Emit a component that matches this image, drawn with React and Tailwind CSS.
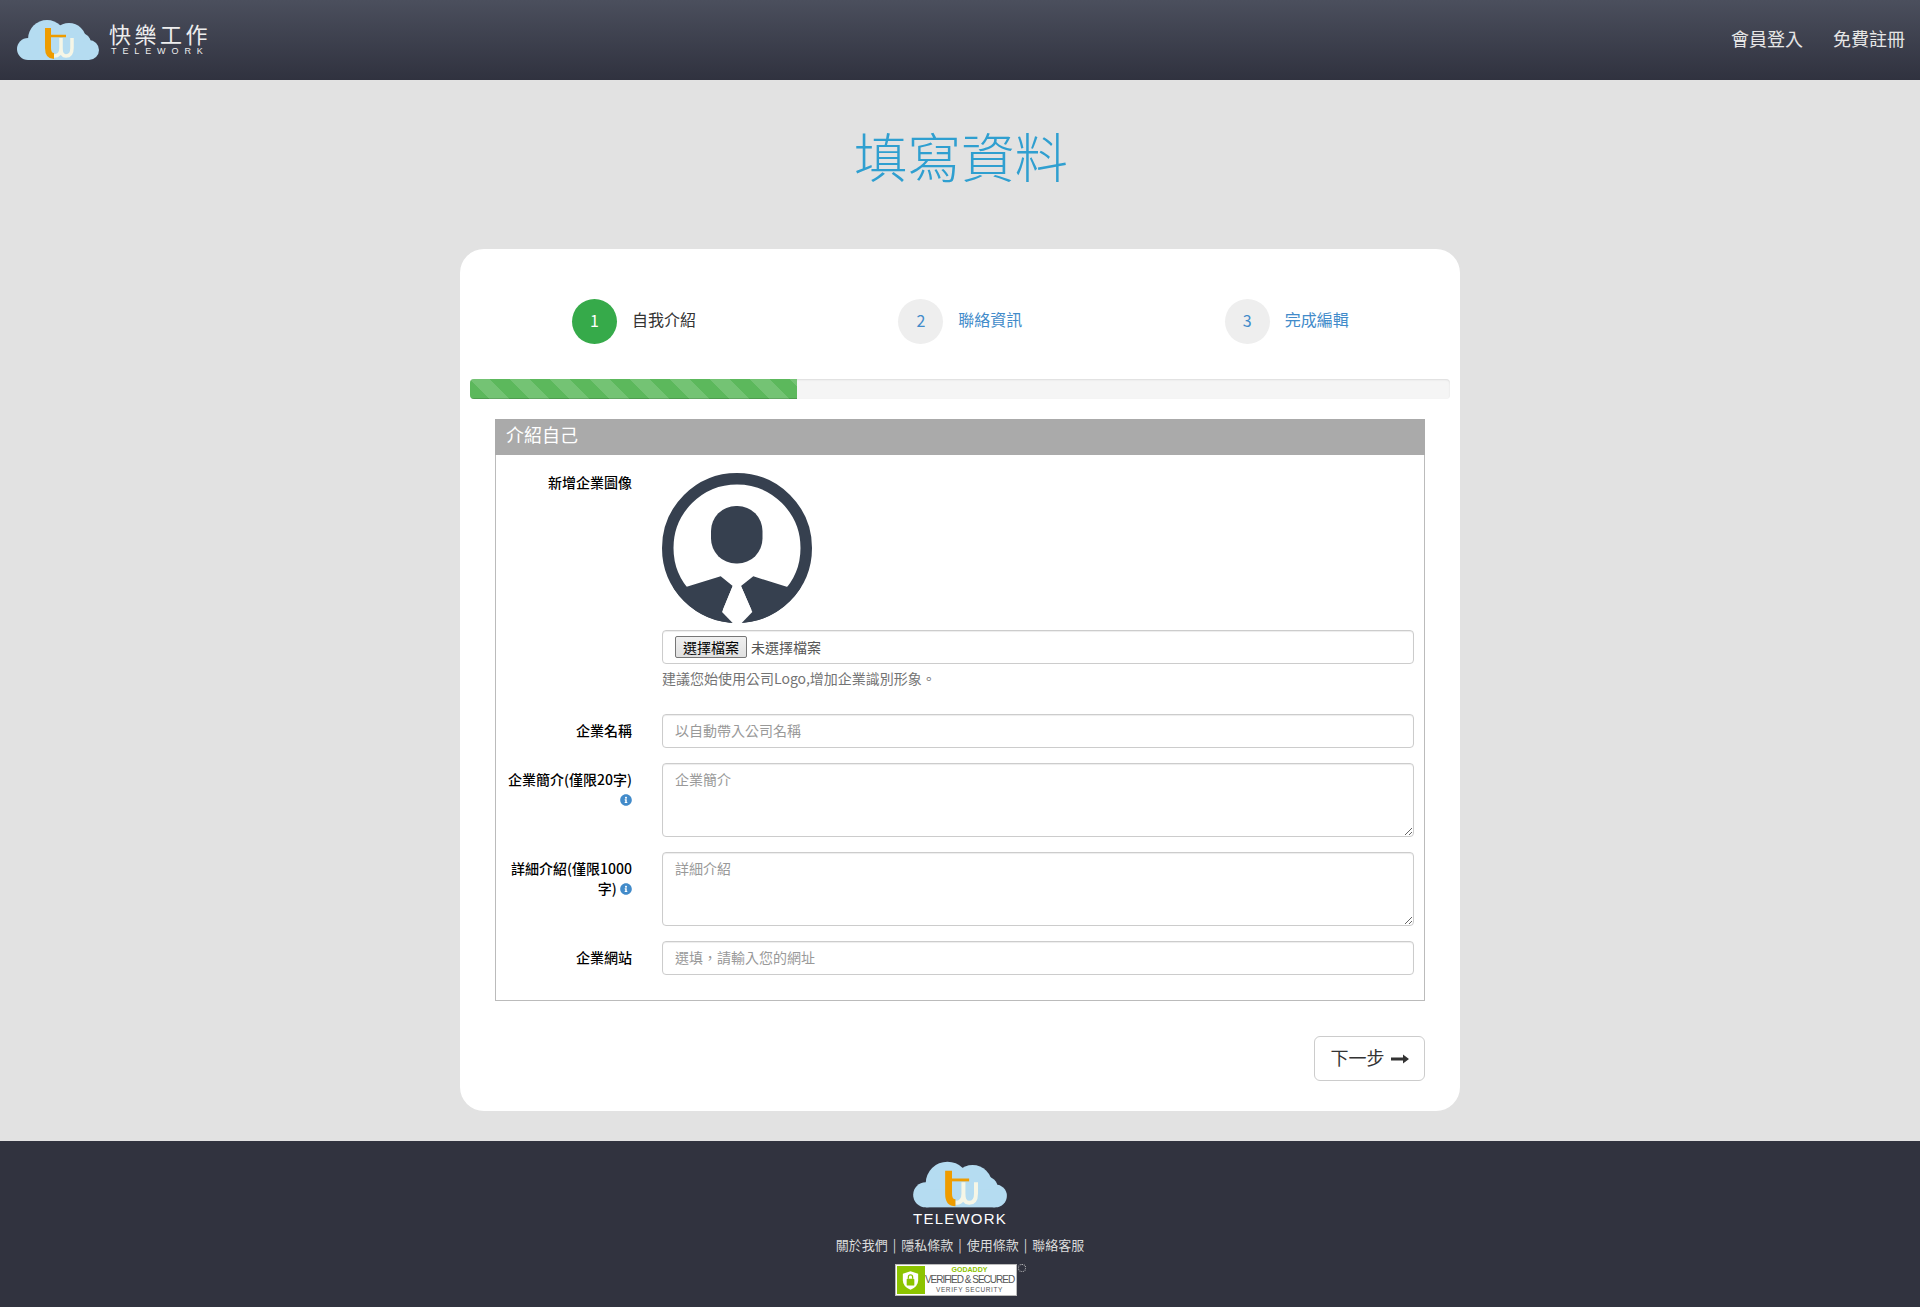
import { FaInfoCircle } from 'react-icons/fa';

const steps = [
  { n: 1, label: '自我介紹', active: true },
  { n: 2, label: '聯絡資訊' },
  { n: 3, label: '完成編輯' },
];

const inputClass = 'w-full h-[34px] px-3 pb-0.5 text-sm bg-white border border-[#ccc] rounded shadow-[inset_0_1px_1px_rgba(0,0,0,0.075)] placeholder:text-[#999] outline-none';
const textareaClass = 'block w-full h-[74px] px-3 pt-[5px] pb-1.5 text-sm leading-5 bg-white border border-[#ccc] rounded shadow-[inset_0_1px_1px_rgba(0,0,0,0.075)] placeholder:text-[#999] outline-none';

function CloudLogo({ className }) {
  return (
    <svg viewBox="0 0 84 40" className={className}>
      <g fill="#b5dcf1">
        <circle cx="12" cy="29" r="11" />
        <circle cx="31" cy="19" r="19" />
        <circle cx="53" cy="20" r="17" />
        <circle cx="65" cy="23" r="10" />
        <circle cx="73" cy="30" r="10" />
        <rect x="12" y="24" width="61" height="16" />
      </g>
      <path d="M38 36 Q45 36 45 28 V18 M45 28 Q45 36 50 36 Q56 36 56 28 V18" fill="none" stroke="#f6f6e6" strokeWidth="3.5" />
      <path d="M32 8 V28 Q32 36 38 36" fill="none" stroke="#ee9c00" strokeWidth="6" />
      <path d="M32 16 H50" fill="none" stroke="#ee9c00" strokeWidth="2.5" />
    </svg>
  );
}

function Avatar() {
  return (
    <svg viewBox="0 0 150 150" className="block w-[150px] h-[150px]">
      <defs>
        <clipPath id="avatar-clip"><circle cx="75" cy="75" r="75" /></clipPath>
      </defs>
      <circle cx="75" cy="75" r="69.25" fill="none" stroke="#36404f" strokeWidth="11.5" />
      <rect x="49" y="33" width="51.5" height="57.5" rx="25" fill="#36404f" />
      <g clipPath="url(#avatar-clip)" fill="#36404f">
        <polygon points="24.7,113.7 58.7,103.3 70.7,113 60,139 70.7,150 0,150 0,113.7" />
        <polygon points="124.7,113.7 91.3,103.3 79,113 90.3,139 79.7,150 150,150 150,113.7" />
      </g>
      {/* the tie cuts through the ring at the bottom */}
      <polygon points="70.7,113 60,139 70.7,150 79.7,150 90.3,139 79,113" fill="#fff" />
    </svg>
  );
}

function Row({ label, className = '', children }) {
  return (
    <div className={`flex gap-[30px] ${className}`}>
      <label className="w-[136px] shrink-0 text-right text-sm leading-5 font-medium text-black pt-[6px]">{label}</label>
      <div className="flex-1 min-w-0">{children}</div>
    </div>
  );
}

function SecurityBadge() {
  return (
    <div className="flex items-start">
      <div className="w-[122px] h-[32px] bg-white border border-[#bbb] flex items-stretch p-px">
        <div className="w-[28px] shrink-0 bg-[#8cc400] flex items-center justify-center">
          <svg viewBox="0 0 20 24" className="w-[17px] h-[21px]">
            <path d="M10 1 L19 4 V12 Q19 19 10 23 Q1 19 1 12 V4 Z" fill="#fff" />
            <rect x="5.5" y="10" width="9" height="8" rx="1" fill="#8cc400" />
            <path d="M7.5 10 V8 Q7.5 5.5 10 5.5 Q12.5 5.5 12.5 8 V10" fill="none" stroke="#8cc400" strokeWidth="1.5" />
          </svg>
        </div>
        <div className="flex-1 min-w-0 flex flex-col items-center justify-center whitespace-nowrap font-['Liberation_Sans',sans-serif] text-[#555]">
          <span className="text-[7px] leading-[8px] font-bold text-[#8cc400]">GODADDY</span>
          <span className="text-[10px] leading-[11px] tracking-[-1px]">VERIFIED &amp; SECURED</span>
          <span className="text-[6.5px] leading-[9px] tracking-[0.6px]">VERIFY SECURITY</span>
        </div>
      </div>
      <span className="w-[8px] h-[8px] ml-px rounded-full border border-dotted border-[#ccc]" />
    </div>
  );
}

export default function App() {
  return (
    <div className="min-h-[1307px] flex flex-col bg-[#e2e2e2] text-[#333] font-['Noto_Sans_CJK_TC','Liberation_Sans',sans-serif]">
      <header className="h-20 shrink-0 flex items-center justify-between pl-4 pr-[15px] bg-gradient-to-b from-[#4b4f5d] to-[#30323f]">
        <div className="flex items-center gap-[9px]">
          <CloudLogo className="w-[84px] h-10" />
          <div className="flex flex-col items-start gap-[3px] pb-[3px] text-[#eee]">
            <span className="text-[22px] leading-[22px] tracking-[3.5px]">快樂工作</span>
            <span className="text-[9px] leading-[9px] tracking-[5.9px] pl-0.5 font-['Liberation_Sans',sans-serif]">TELEWORK</span>
          </div>
        </div>
        <nav className="flex gap-[30px] pb-[5px] text-lg text-[#e6e6e6]">
          <a>會員登入</a>
          <a>免費註冊</a>
        </nav>
      </header>

      <main className="flex-1 flex flex-col items-center">
        <h1 className="h-[169px] flex items-center justify-center pb-[18px] pl-0.5 text-[53.5px] font-light text-[#2f9fd0]">填寫資料</h1>

        <div className="w-[1000px] mb-[30px] px-2.5 pt-[50px] pb-[30px] bg-white rounded-3xl">
          <div className="grid grid-cols-3 pl-px">
            {steps.map(s => (
              <div key={s.n} className="flex items-center gap-[15px] pl-[101px]">
                <span className={`w-[45px] h-[45px] pb-[3px] rounded-full flex items-center justify-center ${s.active ? 'bg-[#36aa4a] text-white' : 'bg-[#eee] text-[#428bca]'}`}>{s.n}</span>
                <span className={`pb-[5px] ${s.active ? 'text-[#333]' : 'text-[#428bca]'}`}>{s.label}</span>
              </div>
            ))}
          </div>

          <div className="mt-[35px] h-5 rounded bg-[#f5f5f5] overflow-hidden shadow-[inset_0_1px_2px_rgba(0,0,0,0.1)]">
            <div className="h-full w-1/3 bg-[#5cb85c] bg-[linear-gradient(45deg,rgba(255,255,255,0.15)_25%,transparent_25%,transparent_50%,rgba(255,255,255,0.15)_50%,rgba(255,255,255,0.15)_75%,transparent_75%,transparent)] bg-[length:40px_40px] shadow-[inset_0_-1px_0_rgba(0,0,0,0.15)]" />
          </div>

          <section className="mt-5 mx-[25px] border border-[#bbb] border-t-0">
            <h2 className="h-9 flex items-center px-[11px] pb-[6px] -mx-px bg-[#aaa] text-lg text-white">介紹自己</h2>
            <div className="pt-[18px] pb-[25px] pr-2.5">
              <Row label="新增企業圖像" className="[&>label]:pt-0 [&>label]:-mt-px">
                <Avatar />
                <div className={`${inputClass} mt-[7px] pb-0 pt-px flex items-center text-[#555]`}>
                  <span className="h-[22px] px-[7px] mr-1 flex items-center bg-gradient-to-b from-[#f0f0f0] to-[#e0e0e0] border border-[#767676] rounded-[2px] text-black whitespace-nowrap">選擇檔案</span>
                  未選擇檔案
                </div>
                <p className="mt-[4px] text-sm leading-5 text-[#737373]">建議您始使用公司Logo,增加企業識別形象。</p>
              </Row>
              <Row label="企業名稱" className="mt-[26px]">
                <input className={inputClass} placeholder="以自動帶入公司名稱" />
              </Row>
              <Row label={<>企業簡介(僅限20字)<br /><FaInfoCircle className="inline text-[#428bca] text-xs -mt-0.5" /></>} className="mt-[15px]">
                <textarea className={textareaClass} placeholder="企業簡介" />
              </Row>
              <Row label={<>詳細介紹(僅限1000<br />字) <FaInfoCircle className="inline text-[#428bca] text-xs -mt-0.5" /></>} className="mt-[15px]">
                <textarea className={textareaClass} placeholder="詳細介紹" />
              </Row>
              <Row label="企業網站" className="mt-[15px]">
                <input className={inputClass} placeholder="選填，請輸入您的網址" />
              </Row>
            </div>
          </section>

          <div className="mt-[35px] mx-[25px] flex justify-end">
            <button className="w-[111px] h-[45px] flex items-center justify-center gap-[6px] bg-white border border-[#ccc] rounded-md text-lg text-[#333]">
              <span className="pb-[3px]">下一步</span>
              <svg viewBox="0 0 18 10" className="w-[18px] h-2.5">
                <path d="M0 3.5 H12 V0.5 L18 5 L12 9.5 V6.5 H0 Z" fill="#333" />
              </svg>
            </button>
          </div>
        </div>
      </main>

      <footer className="h-[166px] shrink-0 flex flex-col items-center pt-5 bg-[#31333f]">
        <CloudLogo className="w-[96px] h-[47px]" />
        <span className="mt-[2px] text-[15px] leading-[18px] tracking-[1.2px] text-white font-['Liberation_Sans',sans-serif]">TELEWORK</span>
        <div className="mt-[7px] flex items-center gap-[5px] text-[13px] leading-5 text-[#dcdcdc]">
          <a>關於我們</a>
          <span>|</span>
          <a>隱私條款</a>
          <span>|</span>
          <a>使用條款</a>
          <span>|</span>
          <a>聯絡客服</a>
        </div>
        <div className="mt-[9px]">
          <SecurityBadge />
        </div>
      </footer>
    </div>
  );
}
